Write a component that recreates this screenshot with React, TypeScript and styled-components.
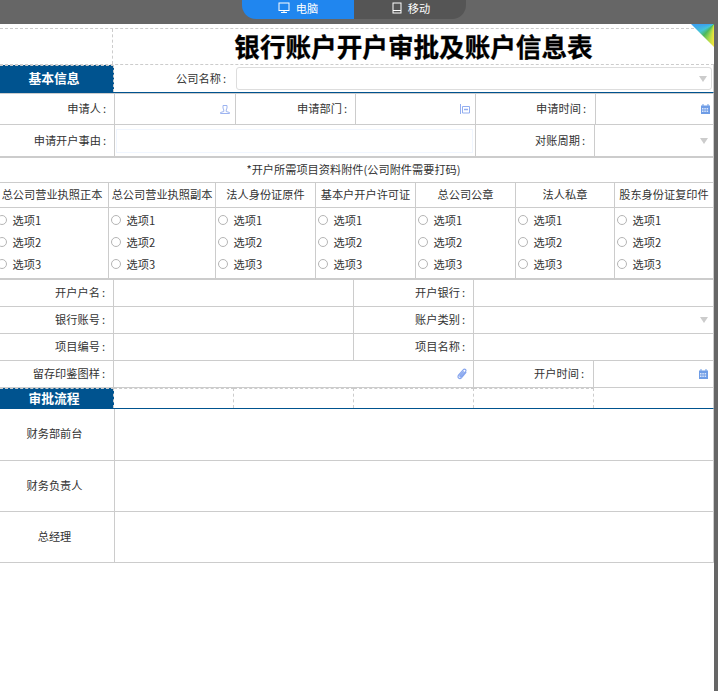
import React from "react";
import styled, { createGlobalStyle } from "styled-components";

const Global = createGlobalStyle`
  html, body { margin: 0; padding: 0; height: 100%; background: #666; overflow: hidden; }
  #root { height: 100%; }
  * { box-sizing: border-box; }
`;

const Page = styled.div`
  height: 691px;
  display: flex;
  flex-direction: column;
  background: #666;
  font-family: "Noto Sans CJK SC", "Liberation Sans", sans-serif;
  font-size: 11.2px;
  color: #333;
`;
const TopBar = styled.div`
  height: 24px;
  flex: none;
  padding-left: 242px;
  display: flex;
  align-items: flex-start;
`;
const Tab = styled.div<{ $active?: boolean }>`
  width: 112px;
  height: 19px;
  display: flex;
  align-items: center;
  justify-content: center;
  gap: 6px;
  color: #fff;
  background: ${(p) => (p.$active ? "#2086ef" : "#555")};
  border-radius: ${(p) => (p.$active ? "0 0 0 14px" : "0 0 14px 0")};
  padding: ${(p) => (p.$active ? "0 0 4px 0" : "0 0 4px 2px")};
`;
const Sheet = styled.div`
  position: relative;
  width: 714px;
  flex: 1;
  background: #fff;
  padding-top: 4px;
  overflow: hidden;
`;
const Corner = styled.div`
  position: absolute;
  top: 0;
  right: 0;
  width: 23px;
  height: 23px;
  clip-path: polygon(0 0, 100% 0, 100% 100%);
  background: conic-gradient(from 180deg at 100% 0, #f5e63c 0deg, #a6d84a 20deg, #4cb85c 42deg, #45c4d8 62deg, #3a9ff0 90deg, #3a9ff0 360deg);
`;
const Row = styled.div<{ $cols: string; $h: number; $bottom?: string; $top?: string }>`
  display: grid;
  grid-template-columns: ${(p) => p.$cols};
  grid-template-rows: minmax(0, 1fr);
  height: ${(p) => p.$h}px;
  border-bottom: ${(p) => p.$bottom ?? "1px solid #ccc"};
  border-top: ${(p) => p.$top ?? "none"};
  border-right: 1px solid #ccc;
`;
const TitleRow = styled.div`
  display: grid;
  grid-template-columns: 113px 1fr;
  height: 37px;
  border-top: 1px dashed #ccc;
  border-bottom: 1px dashed #ccc;
`;
const TitleBlank = styled.div`
  border-right: 1px dashed #ccc;
`;
const Title = styled.h1`
  margin: 0;
  font-size: 25.6px;
  font-weight: 700;
  line-height: 33px;
  color: #000;
  text-align: center;
  -webkit-text-stroke: 0.3px #000;
`;
const SectionLabel = styled.div`
  background: #00538f;
  color: #fff;
  font-size: 12.8px;
  font-weight: 700;
  line-height: 14px;
  display: flex;
  align-items: center;
  justify-content: center;
  padding: 0 5px 2px 0;
  border-top: 1px dashed #ccc;
  border-right: 1px dashed #ccc;
`;
const LabelCell = styled.div<{ $line?: boolean; $pad: number }>`
  display: flex;
  align-items: center;
  justify-content: flex-end;
  padding: 0 ${(p) => p.$pad}px 2px 0;
  border-right: ${(p) => (p.$line === false ? "none" : "1px solid #ccc")};
`;
const Colon = styled.span`
  margin-left: 2px;
`;
const Value = styled.div<{ $line?: boolean }>`
  display: flex;
  align-items: center;
  justify-content: flex-end;
  padding-right: 5px;
  border-right: ${(p) => (p.$line === false ? "none" : "1px solid #ccc")};
`;
const DashCell = styled.div`
  border-top: 1px dashed #ccc;
  border-right: 1px dashed #ccc;
`;
const CompanyBox = styled.div`
  margin: 2px 1px 2px 0;
  border: 1px solid #ddd;
  border-radius: 3px;
  display: flex;
  align-items: center;
  justify-content: flex-end;
  padding-right: 4px;
`;
const ReasonCell = styled.div`
  padding: 4px 2px 3px 1px;
  border-right: 1px solid #ccc;
`;
const ReasonBox = styled.div`
  height: 100%;
  border: 1px solid #f0f6ff;
`;
const Arrow = styled.span`
  width: 0;
  height: 0;
  border-left: 4.5px solid transparent;
  border-right: 4.5px solid transparent;
  border-top: 6px solid #ccc;
`;
const Note = styled.div`
  text-align: center;
  line-height: 23px;
  padding-right: 6px;
`;
const Head = styled.div<{ $shift: number }>`
  display: flex;
  align-items: center;
  justify-content: center;
  white-space: nowrap;
  padding: 0 ${(p) => p.$shift}px 2px 0;
  border-right: 1px solid #ccc;
  &:last-child { border-right: none; }
`;
const OptionColumn = styled.div`
  padding: 0.5px 0 0 2px;
  border-right: 1px solid #ccc;
  &:last-child { border-right: none; }
`;
const FirstOptionColumn = styled(OptionColumn)`
  padding-left: 0;
  margin-left: -3px;
`;
const Option = styled.div`
  height: 22.4px;
  display: flex;
  align-items: center;
  gap: 5.5px;
`;
const Dot = styled.span`
  width: 10px;
  height: 10px;
  flex: none;
  border: 1px solid #b5b5b5;
  border-radius: 50%;
  background: #fff;
`;
const Approver = styled.div`
  display: flex;
  align-items: center;
  justify-content: center;
  padding: 0 5px 3px 0;
  border-right: 1px solid #ccc;
`;
const Blank = styled.div``;

const Label = ({ text, line, pad = 8 }: { text: string; line?: boolean; pad?: number }) => (
  <LabelCell $line={line} $pad={pad}>
    {text}
    <Colon>:</Colon>
  </LabelCell>
);

const MonitorIcon = () => (
  <svg width="12" height="12" viewBox="0 0 12 12" fill="none" stroke="#fff" strokeWidth="1">
    <rect x="1" y="1" width="10" height="7.5" />
    <path d="M6 8.5v2M3 10.5h6" />
  </svg>
);
const TabletIcon = () => (
  <svg width="10" height="12" viewBox="0 0 10 12" fill="none" stroke="#fff" strokeWidth="1">
    <rect x="1" y="1" width="8" height="10" />
    <path d="M1 8.5h8" />
  </svg>
);
const UserIcon = () => (
  <svg width="10" height="10" viewBox="0 0 10 10" fill="none" stroke="#9db4f0" strokeWidth="1">
    <path d="M3 1.5h4v2.5L6.2 6v1.5L9.5 8.5v1h-9v-1L3.8 7.5V6L3 4z" />
  </svg>
);
const DeptIcon = () => (
  <svg width="10" height="10" viewBox="0 0 10 10" fill="none" stroke="#93aef0" strokeWidth="1">
    <path d="M.5 0v10M2.5 2.5h7v6.5h-7z" />
    <path d="M4 5.5h4" strokeWidth="1.5" />
  </svg>
);
const CalendarIcon = () => (
  <svg width="9" height="10" viewBox="0 0 9 10">
    <path fill="#6f9de6" d="M0 1.5h1.5V0h1v1.5h4V0h1v1.5H9V10H0z" />
    <path fill="#dbe6fa" d="M1 4h1.5v1.5H1zM3.3 4h1.5v1.5H3.3zM5.6 4h1.5v1.5H5.6zM1 6.5h1.5V8H1zM3.3 6.5h1.5V8H3.3zM5.6 6.5h1.5V8H5.6z" />
  </svg>
);
const ClipIcon = () => (
  <svg width="11" height="12" viewBox="0 0 11 12" fill="none" stroke="#86a5ee" strokeWidth="1.2">
    <path d="M9.2 4.2 4.6 9.6c-.9 1-2.2 1.1-3 .4s-.8-2 .1-3l4.5-5.2c.7-.8 1.6-.9 2.3-.3s.6 1.5 0 2.2L4.2 8.4c-.4.4-.8.5-1.1.2s-.3-.7.1-1.1l3.6-4.2" />
  </svg>
);

const attachments: [string, number][] = [
  ["总公司营业执照正本", 4],
  ["总公司营业执照副本", 0],
  ["法人身份证原件", 0],
  ["基本户开户许可证", 0],
  ["总公司公章", 0],
  ["法人私章", 0],
  ["股东身份证复印件", 0],
];
const attachCols = "109px 107px 100px 100px 100px 99px 1fr";
const approvers = [
  { name: "财务部前台", h: 52 },
  { name: "财务负责人", h: 51 },
  { name: "总经理", h: 51 },
];

const Options = () => (
  <>
    {["选项1", "选项2", "选项3"].map((o) => (
      <Option key={o}>
        <Dot />
        {o}
      </Option>
    ))}
  </>
);

export default function App() {
  return (
    <Page>
      <Global />
      <TopBar>
        <Tab $active>
          <MonitorIcon />
          电脑
        </Tab>
        <Tab>
          <TabletIcon />
          移动
        </Tab>
      </TopBar>
      <Sheet>
        <Corner />
        <TitleRow>
          <TitleBlank />
          <Title>银行账户开户审批及账户信息表</Title>
        </TitleRow>
        <Row $cols="114px 122px 1fr" $h={28} $bottom="1px solid #00538f">
          <SectionLabel>基本信息</SectionLabel>
          <Label text="公司名称" line={false} pad={10} />
          <CompanyBox>
            <Arrow />
          </CompanyBox>
        </Row>
        <Row $cols="115px 121px 120px 120px 120px 119px" $h={32} $top="1px solid #ccc">
          <Label text="申请人" />
          <Value><UserIcon /></Value>
          <Label text="申请部门" />
          <Value><DeptIcon /></Value>
          <Label text="申请时间" pad={9} />
          <Value $line={false}><CalendarIcon /></Value>
        </Row>
        <Row $cols="115px 361px 119px 1fr" $h={32}>
          <Label text="申请开户事由" />
          <ReasonCell><ReasonBox /></ReasonCell>
          <Label text="对账周期" pad={9} />
          <Value $line={false}><Arrow /></Value>
        </Row>
        <Row $cols="1fr" $h={26} $top="1px solid #ccc">
          <Note>*开户所需项目资料附件(公司附件需要打码)</Note>
        </Row>
        <Row $cols={attachCols} $h={25}>
          {attachments.map(([name, shift]) => (
            <Head key={name} $shift={shift}>{name}</Head>
          ))}
        </Row>
        <Row $cols={attachCols} $h={71}>
          {attachments.map(([name], i) =>
            i === 0 ? (
              <FirstOptionColumn key={name}>
                <Options />
              </FirstOptionColumn>
            ) : (
              <OptionColumn key={name}>
                <Options />
              </OptionColumn>
            )
          )}
        </Row>
        <Row $cols="114px 240px 120px 1fr" $h={28} $top="1px solid #ccc">
          <Label text="开户户名" />
          <Value />
          <Label text="开户银行" />
          <Value $line={false} />
        </Row>
        <Row $cols="114px 240px 120px 1fr" $h={27}>
          <Label text="银行账号" />
          <Value />
          <Label text="账户类别" />
          <Value $line={false}><Arrow /></Value>
        </Row>
        <Row $cols="114px 240px 120px 1fr" $h={27}>
          <Label text="项目编号" />
          <Value />
          <Label text="项目名称" />
          <Value $line={false} />
        </Row>
        <Row $cols="114px 360px 120px 1fr" $h={27}>
          <Label text="留存印鉴图样" />
          <Value><ClipIcon /></Value>
          <Label text="开户时间" pad={9} />
          <Value $line={false}><CalendarIcon /></Value>
        </Row>
        <Row $cols="114px 120px 120px 120px 120px 1fr" $h={21} $bottom="1px solid #00538f">
          <SectionLabel>审批流程</SectionLabel>
          <DashCell />
          <DashCell />
          <DashCell />
          <DashCell />
          <Blank />
        </Row>
        {approvers.map((a) => (
          <Row key={a.name} $cols="115px 1fr" $h={a.h}>
            <Approver>{a.name}</Approver>
            <Blank />
          </Row>
        ))}
      </Sheet>
    </Page>
  );
}
